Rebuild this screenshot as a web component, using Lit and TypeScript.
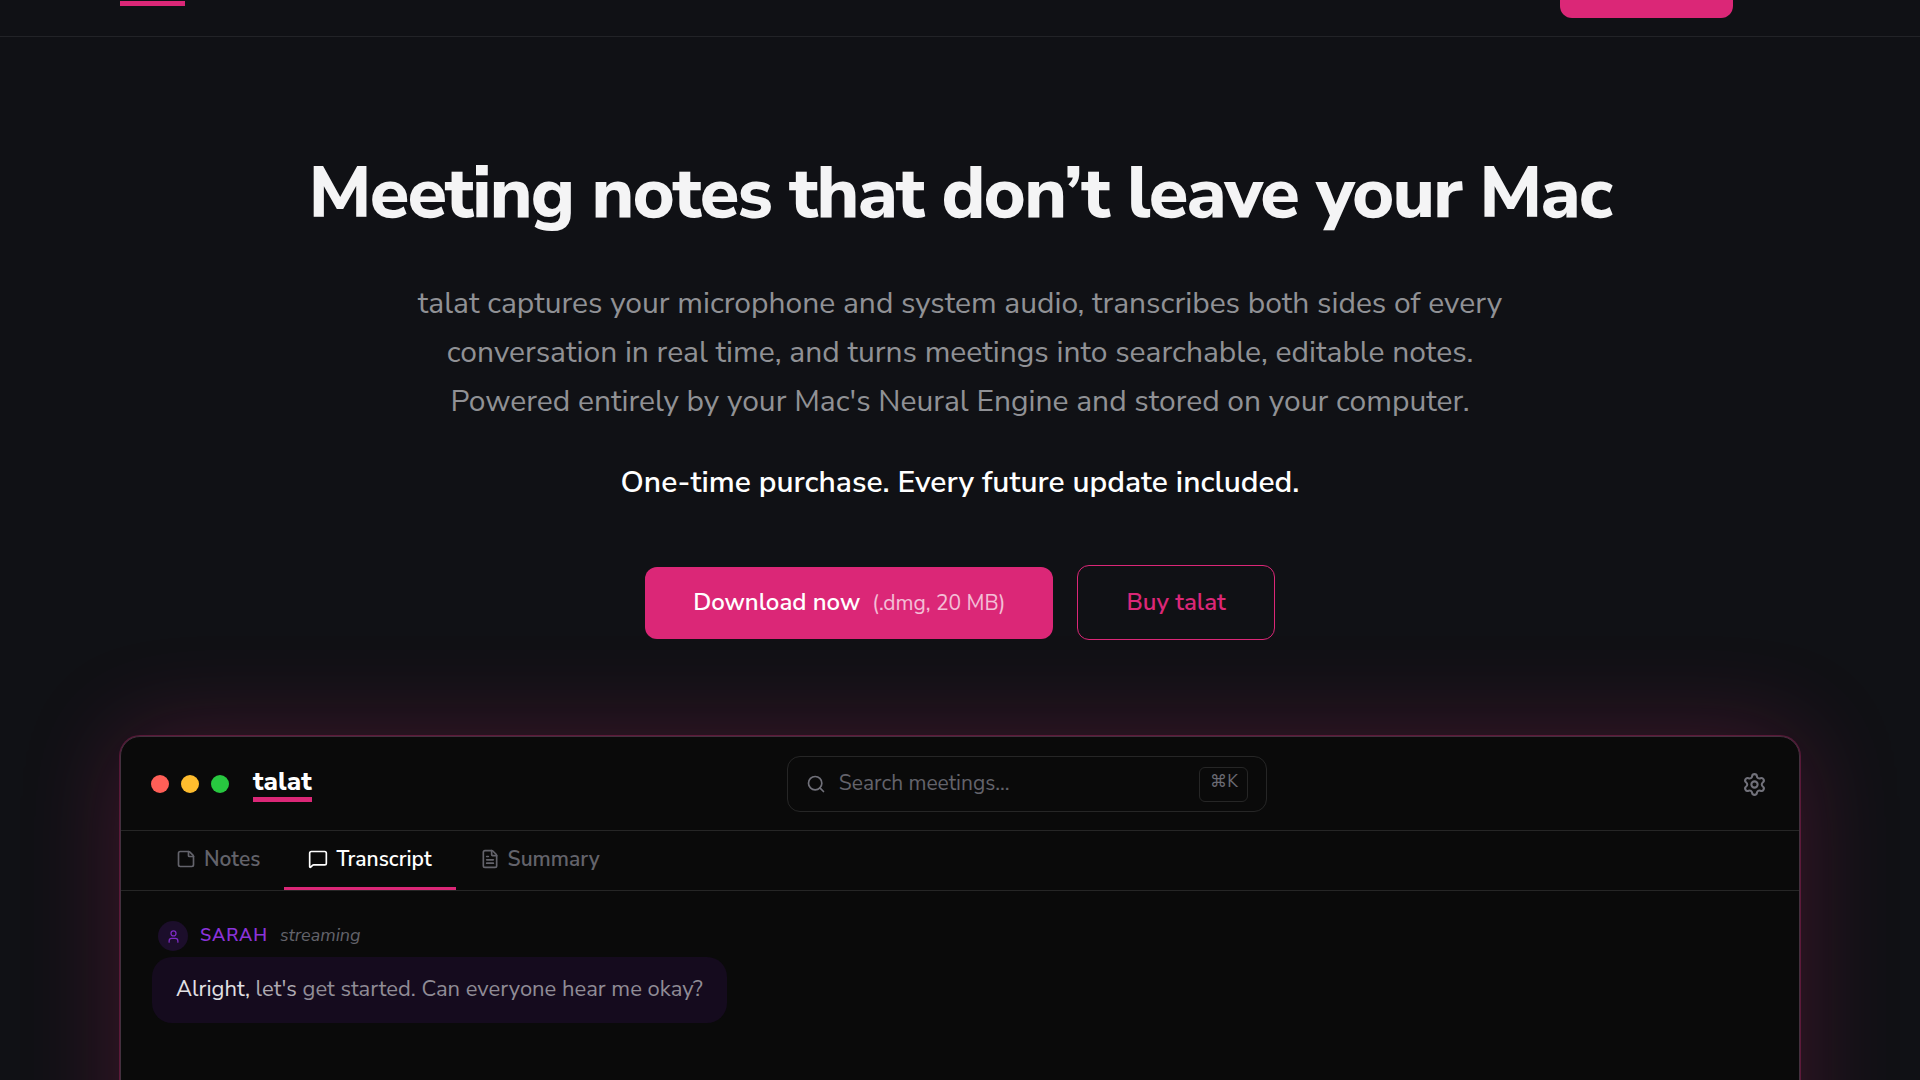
import { LitElement, html, svg, css } from "lit";
import { customElement, state } from "lit/decorators.js";
import { classMap } from "lit/directives/class-map.js";

const icon = (name: string, body: unknown) => html`
  <svg class="icon ${name}" viewBox="0 0 24 24" fill="none" stroke="currentColor" stroke-width="2"
    stroke-linecap="round" stroke-linejoin="round" aria-hidden="true">${body}</svg>`;

const noteIcon = svg`<path d="M21 9a2.4 2.4 0 0 0-.706-1.706l-3.588-3.588A2.4 2.4 0 0 0 15 3H5a2 2 0 0 0-2 2v14a2 2 0 0 0 2 2h14a2 2 0 0 0 2-2z"/><path d="M15 3v5a1 1 0 0 0 1 1h5"/>`;
const messageIcon = svg`<path d="M22 17a2 2 0 0 1-2 2H6.828a2 2 0 0 0-1.414.586l-2.202 2.202A.71.71 0 0 1 2 21.286V5a2 2 0 0 1 2-2h16a2 2 0 0 1 2 2z"/>`;
const fileIcon = svg`<path d="M6 22a2 2 0 0 1-2-2V4a2 2 0 0 1 2-2h8a2.4 2.4 0 0 1 1.704.706l3.588 3.588A2.4 2.4 0 0 1 20 8v12a2 2 0 0 1-2 2z"/><path d="M14 2v5a1 1 0 0 0 1 1h5"/><path d="M10 9H8"/><path d="M16 13H8"/><path d="M16 17H8"/>`;
const searchIcon = svg`<path d="m21 21-4.34-4.34"/><circle cx="11" cy="11" r="8"/>`;
const userIcon = svg`<path d="M19 21v-2a4 4 0 0 0-4-4H9a4 4 0 0 0-4 4v2"/><circle cx="12" cy="7" r="4"/>`;
const settingsIcon = svg`<path d="M9.671 4.136a2.34 2.34 0 0 1 4.659 0 2.34 2.34 0 0 0 3.319 1.915 2.34 2.34 0 0 1 2.33 4.033 2.34 2.34 0 0 0 0 3.831 2.34 2.34 0 0 1-2.33 4.033 2.34 2.34 0 0 0-3.319 1.915 2.34 2.34 0 0 1-4.659 0 2.34 2.34 0 0 0-3.32-1.915 2.34 2.34 0 0 1-2.33-4.033 2.34 2.34 0 0 0 0-3.831A2.34 2.34 0 0 1 6.35 6.051a2.34 2.34 0 0 0 3.319-1.915"/><circle cx="12" cy="12" r="3"/>`;

const tabs = [
  { label: "Notes", glyph: noteIcon },
  { label: "Transcript", glyph: messageIcon },
  { label: "Summary", glyph: fileIcon },
];

@customElement("talat-window")
class TalatWindow extends LitElement {
  @state() private active = "Transcript";

  static styles = css`
    :host {
      display: block;
      min-height: 640px;
      border: 1px solid #43303e;
      border-radius: 20px;
      background: #0a0a0a;
      box-shadow: 0 0 0 1px rgba(219, 39, 119, 0.3), 0 0 100px rgba(219, 39, 119, 0.24);
    }
    .icon { flex: none; width: 20px; height: 20px; }
    .bar {
      display: flex;
      align-items: center;
      justify-content: space-between;
      padding: 19px 32px 18px 30px;
      border-bottom: 1px solid #262626;
    }
    .brand { display: flex; align-items: center; gap: 24px; }
    .lights { display: flex; gap: 12px; }
    .light { width: 18px; height: 18px; border-radius: 50%; }
    .close { background: #ff5f57; }
    .minimise { background: #febc2e; }
    .zoom { background: #28c840; }
    .wordmark {
      border-bottom: 5px solid #db2777;
      color: #fff;
      font-size: 26px;
      font-weight: 800;
      line-height: 30px;
    }
    .search {
      box-sizing: border-box;
      display: flex;
      align-items: center;
      gap: 13px;
      width: 480px;
      height: 56px;
      padding: 0 18px;
      border: 1px solid #262626;
      border-radius: 13px;
      color: #71717a;
    }
    .field {
      flex: 1;
      min-width: 0;
      padding: 0 0 2px;
      border: 0;
      outline: 0;
      background: none;
      color: #fff;
      font: inherit;
      font-size: 21px;
    }
    .field::placeholder { color: #63636b; opacity: 1; }
    .key {
      padding: 2px 9px 7px 10px;
      border: 1px solid #262626;
      border-radius: 6px;
      color: #6b6b73;
      font: inherit;
      font-size: 17px;
      line-height: 24px;
    }
    .settings {
      display: flex;
      padding: 0;
      border: 0;
      background: none;
      color: #71717a;
    }
    .settings .icon { width: 25px; height: 25px; }
    .tabs {
      display: flex;
      padding: 0 31px;
      border-bottom: 1px solid #262626;
    }
    .tab {
      display: flex;
      align-items: center;
      gap: 8px;
      padding: 0 24px;
      border: 0;
      border-bottom: 3px solid transparent;
      background: none;
      color: #63636b;
      font: inherit;
      font-size: 21px;
      font-weight: 600;
      line-height: 56px;
    }
    .tab.selected { border-bottom-color: #db2777; color: #fff; }
    .body {
      display: flex;
      flex-direction: column;
      align-items: flex-start;
      gap: 6px;
      padding: 30px 31px;
    }
    .speaker { display: flex; align-items: flex-start; gap: 12px; padding: 0 6px; }
    .avatar {
      display: flex;
      align-items: center;
      justify-content: center;
      width: 30px;
      height: 30px;
      border-radius: 50%;
      background: #1c0e2b;
      color: #7e2bc4;
    }
    .avatar .icon { width: 15px; height: 15px; }
    .name {
      color: #8b33d9;
      font-size: 18px;
      font-weight: 600;
      line-height: 28px;
      letter-spacing: 0.05em;
    }
    .status { color: #63636b; font-size: 18px; font-style: italic; line-height: 28px; }
    .bubble {
      margin: 0;
      padding: 14px 24px 16px;
      border-radius: 20px;
      background: #150b1e;
      color: #908c96;
      font-size: 22px;
      line-height: 36px;
    }
    .spoken { color: #e2e0e4; }
    .fading { color: #aeaab2; }
  `;

  render() {
    return html`
      <div class="bar">
        <div class="brand">
          <div class="lights">
            <span class="light close"></span><span class="light minimise"></span><span class="light zoom"></span>
          </div>
          <span class="wordmark">talat</span>
        </div>
        <label class="search">
          ${icon("search-icon", searchIcon)}
          <input class="field" type="text" placeholder="Search meetings..." aria-label="Search meetings" />
          <kbd class="key">⌘K</kbd>
        </label>
        <button class="settings" aria-label="Settings">${icon("gear", settingsIcon)}</button>
      </div>
      <div class="tabs" role="tablist">
        ${tabs.map(
          (tab) => html`<button
            role="tab"
            class=${classMap({ tab: true, selected: tab.label === this.active })}
            aria-selected=${tab.label === this.active}
            @click=${() => (this.active = tab.label)}
          >${icon("tab-icon", tab.glyph)}${tab.label}</button>`
        )}
      </div>
      <div class="body">
        <div class="speaker">
          <span class="avatar">${icon("person", userIcon)}</span>
          <span class="name">SARAH</span>
          <span class="status">streaming</span>
        </div>
        <p class="bubble"><span class="spoken">Alright,</span> <span class="fading">let's</span> get started. Can everyone hear me okay?</p>
      </div>
    `;
  }
}

@customElement("app-root")
class AppRoot extends LitElement {
  static styles = css`
    :host {
      display: block;
      height: 100vh;
      overflow: hidden;
      background: #101115;
      color: #fff;
      font-family: "Nunito Sans", Nunito, Lato, "Open Sans", sans-serif;
    }
    a { color: inherit; text-decoration: none; }
    .header {
      display: flex;
      justify-content: space-between;
      height: 36px;
      padding: 0 187px 0 120px;
      border-bottom: 1px solid #222327;
    }
    .home { align-self: flex-start; width: 65px; height: 1px; border-bottom: 5px solid #db2777; }
    .get {
      width: 173px;
      height: 18px;
      border-radius: 0 0 12px 12px;
      background: #db2777;
    }
    .page { padding: 117px 120px 0; }
    .hero { text-align: center; }
    .title {
      margin: 0;
      color: #f4f4f5;
      font-size: 72px;
      font-weight: 800;
      line-height: 79px;
      letter-spacing: -0.025em;
    }
    .lead {
      max-width: 1120px;
      margin: 46px auto 0;
      color: #909195;
      font-size: 30px;
      line-height: 49px;
    }
    .offer { margin: 32px 0 0; font-size: 30px; font-weight: 600; line-height: 49px; }
    .actions {
      display: flex;
      justify-content: center;
      align-items: center;
      gap: 24px;
      margin: 58px 0 96px;
      font-size: 24px;
      font-weight: 600;
      line-height: 35px;
    }
    .primary {
      display: flex;
      align-items: baseline;
      gap: 12px;
      padding: 18px 48px;
      border-radius: 12px;
      background: #db2777;
    }
    .detail { opacity: 0.7; font-size: 21px; font-weight: 400; }
    .secondary {
      padding: 19px 48px;
      border: 1px solid #db2777;
      border-radius: 12px;
      color: #db2777;
    }
  `;

  render() {
    return html`
      <header class="header">
        <a class="home" href="#" aria-label="talat"></a>
        <a class="get" href="#download" aria-label="Download"></a>
      </header>
      <main class="page">
        <section class="hero">
          <h1 class="title">Meeting notes that don’t leave your Mac</h1>
          <p class="lead">talat captures your microphone and system audio, transcribes both sides of every conversation in real time, and turns meetings into searchable, editable notes. Powered entirely by your Mac's Neural Engine and stored on your computer.</p>
          <p class="offer">One-time purchase. Every future update included.</p>
          <div class="actions">
            <a class="primary" href="#download">Download now <span class="detail">(.dmg, 20 MB)</span></a>
            <a class="secondary" href="#buy">Buy talat</a>
          </div>
        </section>
        <talat-window></talat-window>
      </main>
    `;
  }
}
